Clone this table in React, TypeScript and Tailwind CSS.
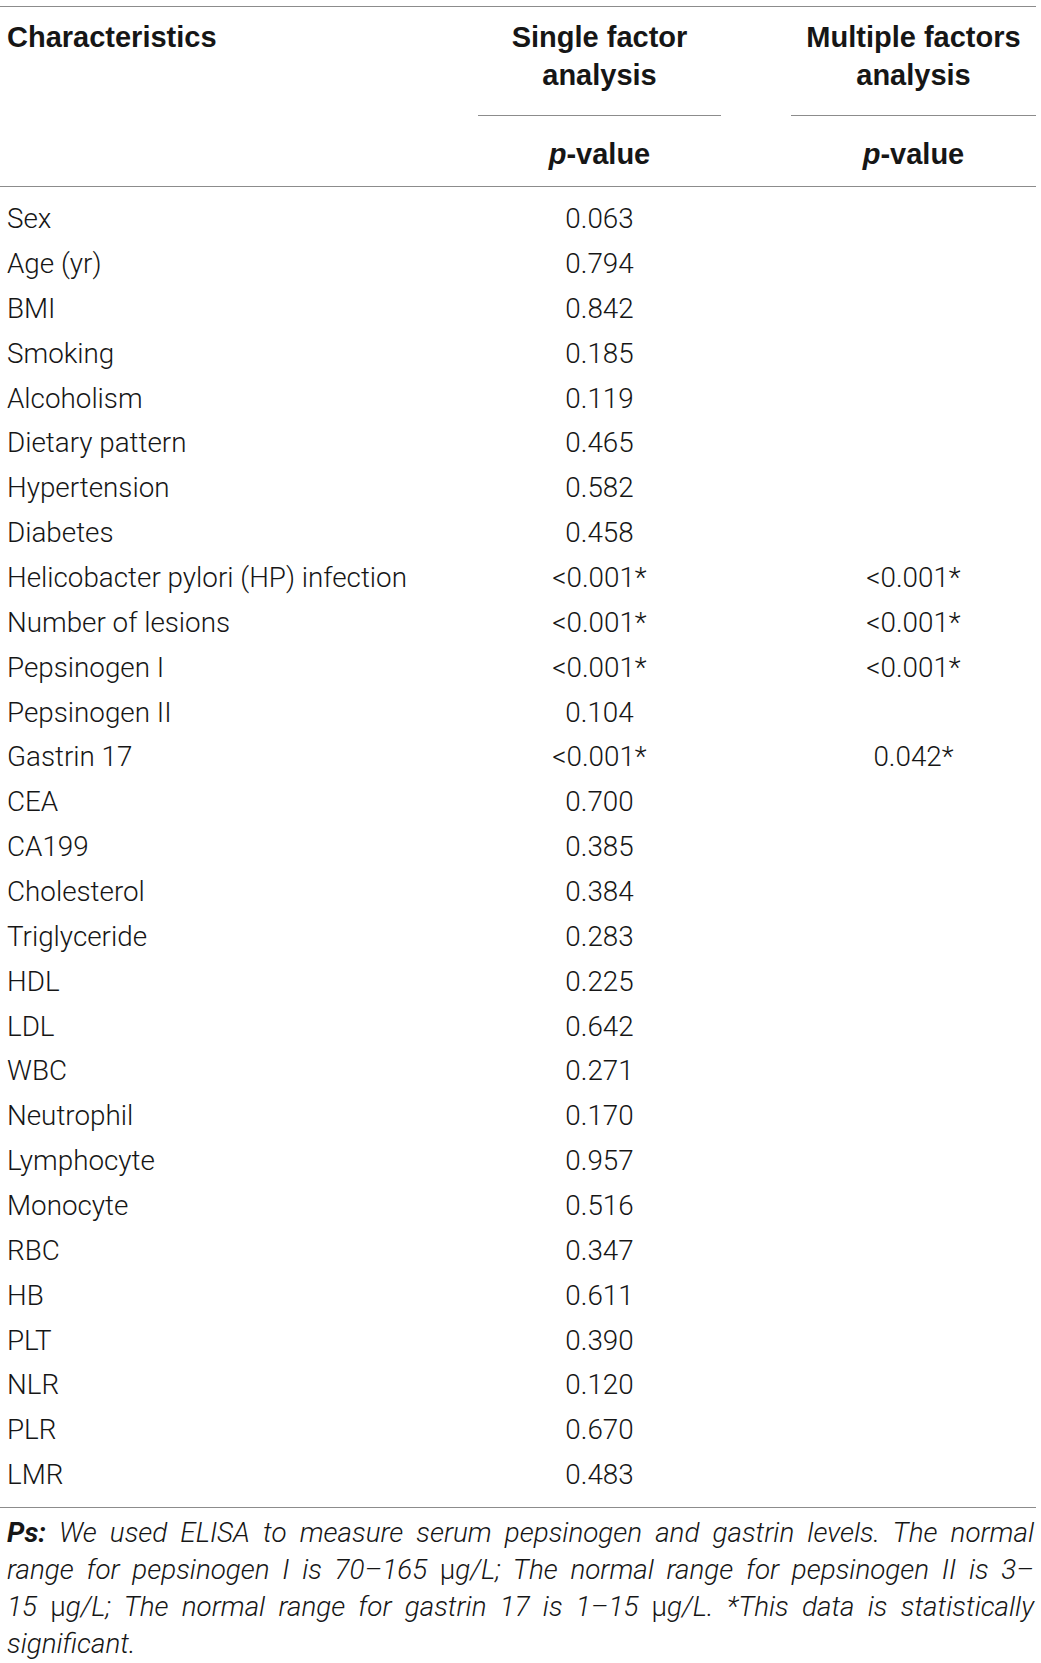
import React from "react";

const rows: [string, string, string][] = [
  ["Sex", "0.063", ""],
  ["Age (yr)", "0.794", ""],
  ["BMI", "0.842", ""],
  ["Smoking", "0.185", ""],
  ["Alcoholism", "0.119", ""],
  ["Dietary pattern", "0.465", ""],
  ["Hypertension", "0.582", ""],
  ["Diabetes", "0.458", ""],
  ["Helicobacter pylori (HP) infection", "<0.001*", "<0.001*"],
  ["Number of lesions", "<0.001*", "<0.001*"],
  ["Pepsinogen I", "<0.001*", "<0.001*"],
  ["Pepsinogen II", "0.104", ""],
  ["Gastrin 17", "<0.001*", "0.042*"],
  ["CEA", "0.700", ""],
  ["CA199", "0.385", ""],
  ["Cholesterol", "0.384", ""],
  ["Triglyceride", "0.283", ""],
  ["HDL", "0.225", ""],
  ["LDL", "0.642", ""],
  ["WBC", "0.271", ""],
  ["Neutrophil", "0.170", ""],
  ["Lymphocyte", "0.957", ""],
  ["Monocyte", "0.516", ""],
  ["RBC", "0.347", ""],
  ["HB", "0.611", ""],
  ["PLT", "0.390", ""],
  ["NLR", "0.120", ""],
  ["PLR", "0.670", ""],
  ["LMR", "0.483", ""],
];

const grid = "grid grid-cols-[478px_243px_70px_245px]";
const mu = <span className="not-italic">μ</span>;

export default function App() {
  return (
    <div className="w-[1041px] bg-white pt-[6px] text-[#161616] font-['Roboto',sans-serif]">
      <div className="w-[1036px]">
        <div className="h-px bg-[#8c8c8c]" />
        {/* header */}
        <div className={`${grid} font-['Liberation_Sans',Arial,sans-serif] font-bold text-[29px] leading-[38px]`}>
          <div className="pl-[7px] pt-[11px]">Characteristics</div>
          <div className="flex flex-col">
            <div className="pt-[11px] pb-[21px] text-center">
              Single factor
              <br />
              analysis
            </div>
            <div className="h-px bg-[#8c8c8c]" />
            <div className="pt-[19px] pb-[13px] text-center">
              <i>p</i>-value
            </div>
          </div>
          <div />
          <div className="flex flex-col">
            <div className="pt-[11px] pb-[21px] text-center">
              Multiple factors
              <br />
              analysis
            </div>
            <div className="h-px bg-[#8c8c8c]" />
            <div className="pt-[19px] pb-[13px] text-center">
              <i>p</i>-value
            </div>
          </div>
        </div>
        <div className="h-px bg-[#8c8c8c]" />
        {/* body */}
        <div className="py-[9.5px] font-light text-[27.8px]">
          {rows.map(([name, a, b]) => (
            <div key={name} className={`${grid} h-[44.86px] items-center`}>
              <div className="pl-[7px] whitespace-nowrap">{name}</div>
              <div className="text-center">{a}</div>
              <div />
              <div className="text-center">{b}</div>
            </div>
          ))}
        </div>
        <div className="h-px bg-[#8c8c8c]" />
        {/* footnote */}
        <div className="pt-[6px] pl-[7px] pr-[2px] italic font-light text-[27.8px] leading-[37px]">
          <div className="text-justify [text-align-last:justify] whitespace-nowrap">
            <b className="font-bold">Ps:</b> We used ELISA to measure serum pepsinogen and gastrin levels. The normal
          </div>
          <div className="text-justify [text-align-last:justify] whitespace-nowrap">
            range for pepsinogen I is 70–165 {mu}g/L; The normal range for pepsinogen II is 3–
          </div>
          <div className="text-justify [text-align-last:justify] whitespace-nowrap">
            15 {mu}g/L; The normal range for gastrin 17 is 1–15 {mu}g/L. *This data is statistically
          </div>
          <div>significant.</div>
        </div>
      </div>
    </div>
  );
}
